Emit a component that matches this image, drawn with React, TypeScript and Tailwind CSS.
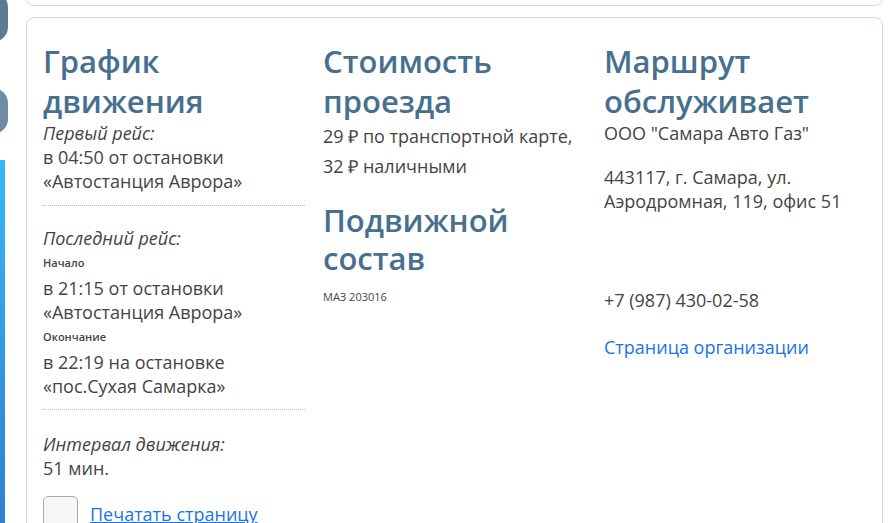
export default function App() {
  const f = { fontFamily: '"Open Sans", sans-serif' };
  return (
    <div className="relative w-[890px] h-[523px] overflow-hidden bg-white text-[#444]" style={f}>
      <div className="absolute left-[-22px] top-[-8px] w-[30px] h-[50px] rounded-full bg-[#5d7a90]" />
      <div className="absolute left-[-22px] top-[88px] w-[30px] h-[46px] rounded-full bg-[#6f8ca2]" />
      <div className="absolute left-0 top-[160px] w-[5px] h-[363px] bg-gradient-to-b from-[#35b8f5] to-[#2f80d0]" />
      <div className="absolute left-[26px] top-[-20px] w-[857px] h-[26px] border border-[#cfdce8] rounded-[8px]">
        <div className="absolute left-[18px] top-[-10px] w-[30px] h-[25px] border border-[#aaa] rounded-[5px] bg-[#f6f6f6]" />
        <div className="absolute left-[808px] top-[-10px] w-[30px] h-[25px] border border-[#aaa] rounded-[5px] bg-[#f6f6f6]" />
      </div>
      <div className="absolute left-[26px] top-[17px] w-[857px] h-[560px] border border-[#cfdce8] rounded-[8px] pl-[16px] pt-[23px]">
        <div className="flex">
          <div className="w-[280px] pr-[18px]">
            <h2 className="text-[31px] leading-[40px] text-[#46708e] font-semibold">График движения</h2>
            <div className="mt-[0px] text-[18px] leading-[24px]">
              <div className="italic">Первый рейс:</div>
              <div>в 04:50 от остановки «Автостанция Аврора»</div>
              <div className="border-t border-dotted border-[#bbb] mt-[12px] mb-[20px]" />
              <div className="italic">Последний рейс:</div>
              <div className="text-[11px] font-semibold leading-[16px] my-[5px]">Начало</div>
              <div>в 21:15 от остановки «Автостанция Аврора»</div>
              <div className="text-[11px] font-semibold leading-[16px] my-[5px]">Окончание</div>
              <div>в 22:19 на остановке «пос.Сухая Самарка»</div>
              <div className="border-t border-dotted border-[#bbb] mt-[11px] mb-[22px]" />
              <div className="italic">Интервал движения:</div>
              <div>51 мин.</div>
              <div className="flex items-center gap-[12px] mt-[16px]">
                <div className="w-[35px] h-[35px] border border-[#aaa] rounded-[5px] bg-[#f6f6f6]" />
                <span className="text-[#1a73e8] underline">Печатать страницу</span>
              </div>
            </div>
          </div>
          <div className="w-[281px] pr-[18px]">
            <h2 className="text-[31px] leading-[40px] text-[#46708e] font-semibold">Стоимость проезда</h2>
            <div className="mt-[0px] text-[18px] leading-[30px]">
              <div>29 ₽ по транспортной карте,</div>
              <div>32 ₽ наличными</div>
            </div>
            <h2 className="mt-[20px] text-[31px] leading-[38px] text-[#46708e] font-semibold">Подвижной состав</h2>
            <div className="mt-[12px] text-[11px]">МАЗ 203016</div>
          </div>
          <div className="w-[270px]">
            <h2 className="text-[31px] leading-[40px] text-[#46708e] font-semibold">Маршрут обслуживает</h2>
            <div className="mt-[0px] text-[18px] leading-[24px]">
              <div>ООО "Самара Авто Газ"</div>
              <div className="mt-[20px]">443117, г. Самара, ул. Аэродромная, 119, офис 51</div>
              <div className="mt-[75px]">+7 (987) 430-02-58</div>
              <div className="mt-[23px] text-[#1a73e8]">Страница организации</div>
            </div>
          </div>
        </div>
      </div>
    </div>
  );
}
